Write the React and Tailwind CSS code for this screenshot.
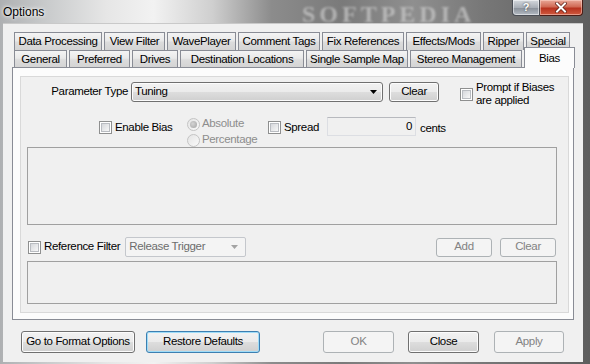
import React from 'react';

const row1 = [
  ['Data Processing', 88],
  ['View Filter', 61],
  ['WavePlayer', 69],
  ['Comment Tags', 82],
  ['Fix References', 82],
  ['Effects/Mods', 75],
  ['Ripper', 41],
  ['Special', 44],
];

const row2 = [
  ['General', 53],
  ['Preferred', 61],
  ['Drives', 46],
  ['Destination Locations', 124],
  ['Single Sample Map', 102],
  ['Stereo Management', 112],
];

const tabBg = 'bg-[linear-gradient(#f4f4f4,#e9e9e9_45%,#dcdcdc_55%,#d4d4d4)]';

const Tab = ({ label, w }) => (
  <div
    style={{ width: w }}
    className={`h-full shrink-0 flex items-center justify-center border border-b-0 border-[#898c95] ${tabBg} pt-[1px] whitespace-nowrap`}
  >
    {label}
  </div>
);

const Check = ({ className = '' }) => (
  <span className={`block shrink-0 w-[13px] h-[13px] border border-[#8e8f8f] bg-white p-[1px] ${className}`}>
    <span className="block w-full h-full border border-[#b9bcc1] bg-[linear-gradient(135deg,#d6d8dc,#f7f7f7)]" />
  </span>
);

const Radio = ({ checked }) => (
  <span className="flex shrink-0 items-center justify-center w-[13px] h-[13px] rounded-full border border-[#c4c4c4] bg-[linear-gradient(135deg,#e4e4e4,#fafafa)]">
    {checked && <span className="block w-[7px] h-[7px] rounded-full bg-[radial-gradient(circle_at_40%_40%,#d4d4d4,#a3a3a3)]" />}
  </span>
);

const Btn = ({ children, className = '', disabled, focused }) => {
  let look =
    'border-[#707070] bg-[linear-gradient(#f2f2f2,#ebebeb_48%,#dddddd_52%,#cfcfcf)] shadow-[inset_0_0_0_1px_#fcfcfc] text-black';
  if (disabled) look = 'border-[#adb2b5] bg-[#f4f4f4] text-[#838383]';
  if (focused)
    look =
      'border-[#3c7fb1] bg-[linear-gradient(#f2f2f2,#ebebeb_48%,#dddddd_52%,#cfcfcf)] shadow-[inset_0_0_0_1px_#9fdcf8] text-black';
  return (
    <div className={`shrink-0 flex items-center justify-center whitespace-nowrap rounded-[3px] border ${look} ${className}`}>
      {children}
    </div>
  );
};

const Arrow = ({ color }) => (
  <svg width="7" height="4" viewBox="0 0 7 4">
    <path d="M0 0h7L3.5 4z" fill={color} />
  </svg>
);

export default function App() {
  return (
    <div className="relative w-[590px] h-[364px] overflow-hidden font-['Liberation_Sans',Arial,sans-serif] text-[11.5px] tracking-[-0.35px] text-black bg-[linear-gradient(90deg,#aeb0b2_0%,#c9cbcc_8%,#e6e6e6_18%,#f2f2f2_26%,#cfcfcf_36%,#8c8c8c_46%,#7a7a7a_58%,#8f8f8f_70%,#777_82%,#5e5e5e_100%)]">
      <span className="absolute left-[302px] top-0 leading-[28px] font-['Liberation_Serif',serif] font-bold text-[24px] tracking-[4px] text-[#d6d6d6] opacity-60 blur-[1px]">
        SOFTPEDIA
      </span>

      {/* title bar */}
      <div className="relative h-[23px] flex items-start">
        <span className="ml-[3px] mt-[5px] text-[12px] leading-[14px] tracking-normal [text-shadow:0_0_5px_#ffffff,0_0_3px_#ffffff]">
          Options
        </span>
        <div className="ml-auto mr-[7px] flex h-[16px]">
          <div className="w-[28px] h-full flex items-center justify-center rounded-bl-[4px] border border-t-0 border-[#4a4e55] bg-[linear-gradient(#d4d8dd,#a9afb7_50%,#8b929b_55%,#b3bac2)] shadow-[inset_0_0_0_1px_rgba(255,255,255,0.5)]">
            <span className="text-white font-bold text-[11px] leading-none [text-shadow:0_0_2px_#333]">?</span>
          </div>
          <div className="w-[43px] h-full flex items-center justify-center rounded-br-[4px] border border-l-0 border-t-0 border-[#4b1d16] bg-[linear-gradient(#e9a898,#d06a55_45%,#b7331f_55%,#d05a3f)] shadow-[inset_0_0_0_1px_rgba(255,220,210,0.5)]">
            <svg width="12" height="11" viewBox="0 0 12 11">
              <path d="M2 1.5l8 8M10 1.5l-8 8" stroke="#5a1a10" strokeWidth="3.4" strokeLinecap="square" />
              <path d="M2 1.5l8 8M10 1.5l-8 8" stroke="#ffffff" strokeWidth="2" strokeLinecap="square" />
            </svg>
          </div>
        </div>
      </div>

      {/* client area */}
      <div className="ml-[3px] w-[580px] h-[339px] bg-[#f0f0f0] border-t border-[#c9c9c9] flex flex-col">
        <div className="ml-[9px] mt-[8px] w-[562px] flex flex-col">
          <div className="h-[18px] flex gap-[2px] pl-[2px]">
            {row1.map(([l, w]) => (
              <Tab key={l} label={l} w={w} />
            ))}
          </div>
          <div className="h-[17px] flex gap-[2px] pl-[2px]">
            {row2.map(([l, w]) => (
              <Tab key={l} label={l} w={w} />
            ))}
            <div className="relative z-10 w-[51px] h-[21px] -mt-[3px] shrink-0 flex items-start justify-center pt-[2px] border border-b-0 border-[#898c95] bg-[#fcfcfc]">
              Bias
            </div>
          </div>

          {/* tab pane */}
          <div className="h-[253px] border border-[#898c95] bg-[#fcfcfc] pl-[7px] pt-[8px]">
            <div className="w-[549px] h-[237px] border border-[#d9d9d9] bg-[#f0f0f0] flex flex-col">
              {/* row 1 */}
              <div className="mt-[5px] h-[20px] flex items-start">
                <span className="w-[107px] h-full flex items-center justify-end">Parameter Type</span>
                <div className="ml-[3px] w-[252px] h-full flex items-center rounded-[3px] border border-[#707070] bg-[linear-gradient(#f2f2f2,#ebebeb_48%,#dddddd_52%,#cfcfcf)] shadow-[inset_0_0_0_1px_#fcfcfc] pl-[3px] pr-[5px]">
                  <span className="flex-1">Tuning</span>
                  <Arrow color="#000" />
                </div>
                <Btn className="ml-[6px] w-[50px] h-full">Clear</Btn>
                <Check className="ml-[21px] mt-[6px]" />
                <div className="ml-[3px] -mt-[1px] flex flex-col leading-[13px]">
                  <span>Prompt if Biases</span>
                  <span>are applied</span>
                </div>
              </div>

              {/* row 2 */}
              <div className="mt-[14px] h-[31px] flex items-start">
                <div className="ml-[78px] w-[88px] flex items-center mt-[3px]">
                  <Check />
                  <span className="ml-[3px]">Enable Bias</span>
                </div>
                <div className="w-[81px] flex flex-col text-[#8d8d8d]">
                  <div className="h-[16px] flex items-center">
                    <Radio checked />
                    <span className="ml-[2px]">Absolute</span>
                  </div>
                  <div className="h-[16px] flex items-center">
                    <Radio />
                    <span className="ml-[2px]">Percentage</span>
                  </div>
                </div>
                <div className="w-[59px] flex items-center mt-[3px]">
                  <Check />
                  <span className="ml-[3px]">Spread</span>
                </div>
                <div className="mt-[1px] w-[89px] h-[19px] flex items-center justify-end pr-[3px] border border-[#dcdee3] border-t-[#b7b9be] bg-[#f0f0f0]">
                  0
                </div>
                <span className="ml-[4px] mt-[4px]">cents</span>
              </div>

              {/* list */}
              <div className="ml-[6px] w-[530px] h-[78px] border border-[#a0a0a0] bg-[#f0f0f0]" />

              {/* row 3 */}
              <div className="mt-[12px] h-[20px] flex items-center">
                <Check className="ml-[7px]" />
                <span className="ml-[3px]">Reference Filter</span>
                <div className="ml-[5px] w-[121px] h-full flex items-center rounded-[2px] border border-[#c4c7cc] bg-[#f4f4f4] text-[#6d6d6d] pl-[3px] pr-[7px]">
                  <span className="flex-1">Release Trigger</span>
                  <Arrow color="#a3a3a3" />
                </div>
                <Btn disabled className="ml-auto w-[56px] h-[19px]">
                  Add
                </Btn>
                <Btn disabled className="ml-[8px] mr-[12px] w-[56px] h-[19px]">
                  Clear
                </Btn>
              </div>

              {/* second list */}
              <div className="mt-[4px] ml-[6px] w-[530px] h-[43px] border border-[#a0a0a0] bg-[#f0f0f0]" />
            </div>
          </div>
        </div>

        {/* bottom buttons */}
        <div className="mt-[11px] h-[22px] flex">
          <Btn className="ml-[18px] w-[114px] h-full">Go to Format Options</Btn>
          <Btn focused className="ml-[11px] w-[114px] h-full">
            Restore Defaults
          </Btn>
          <Btn disabled className="ml-[63px] w-[71px] h-full">
            OK
          </Btn>
          <Btn className="ml-[14px] w-[71px] h-full">Close</Btn>
          <Btn disabled className="ml-[15px] w-[70px] h-full">
            Apply
          </Btn>
        </div>
      </div>
    </div>
  );
}
